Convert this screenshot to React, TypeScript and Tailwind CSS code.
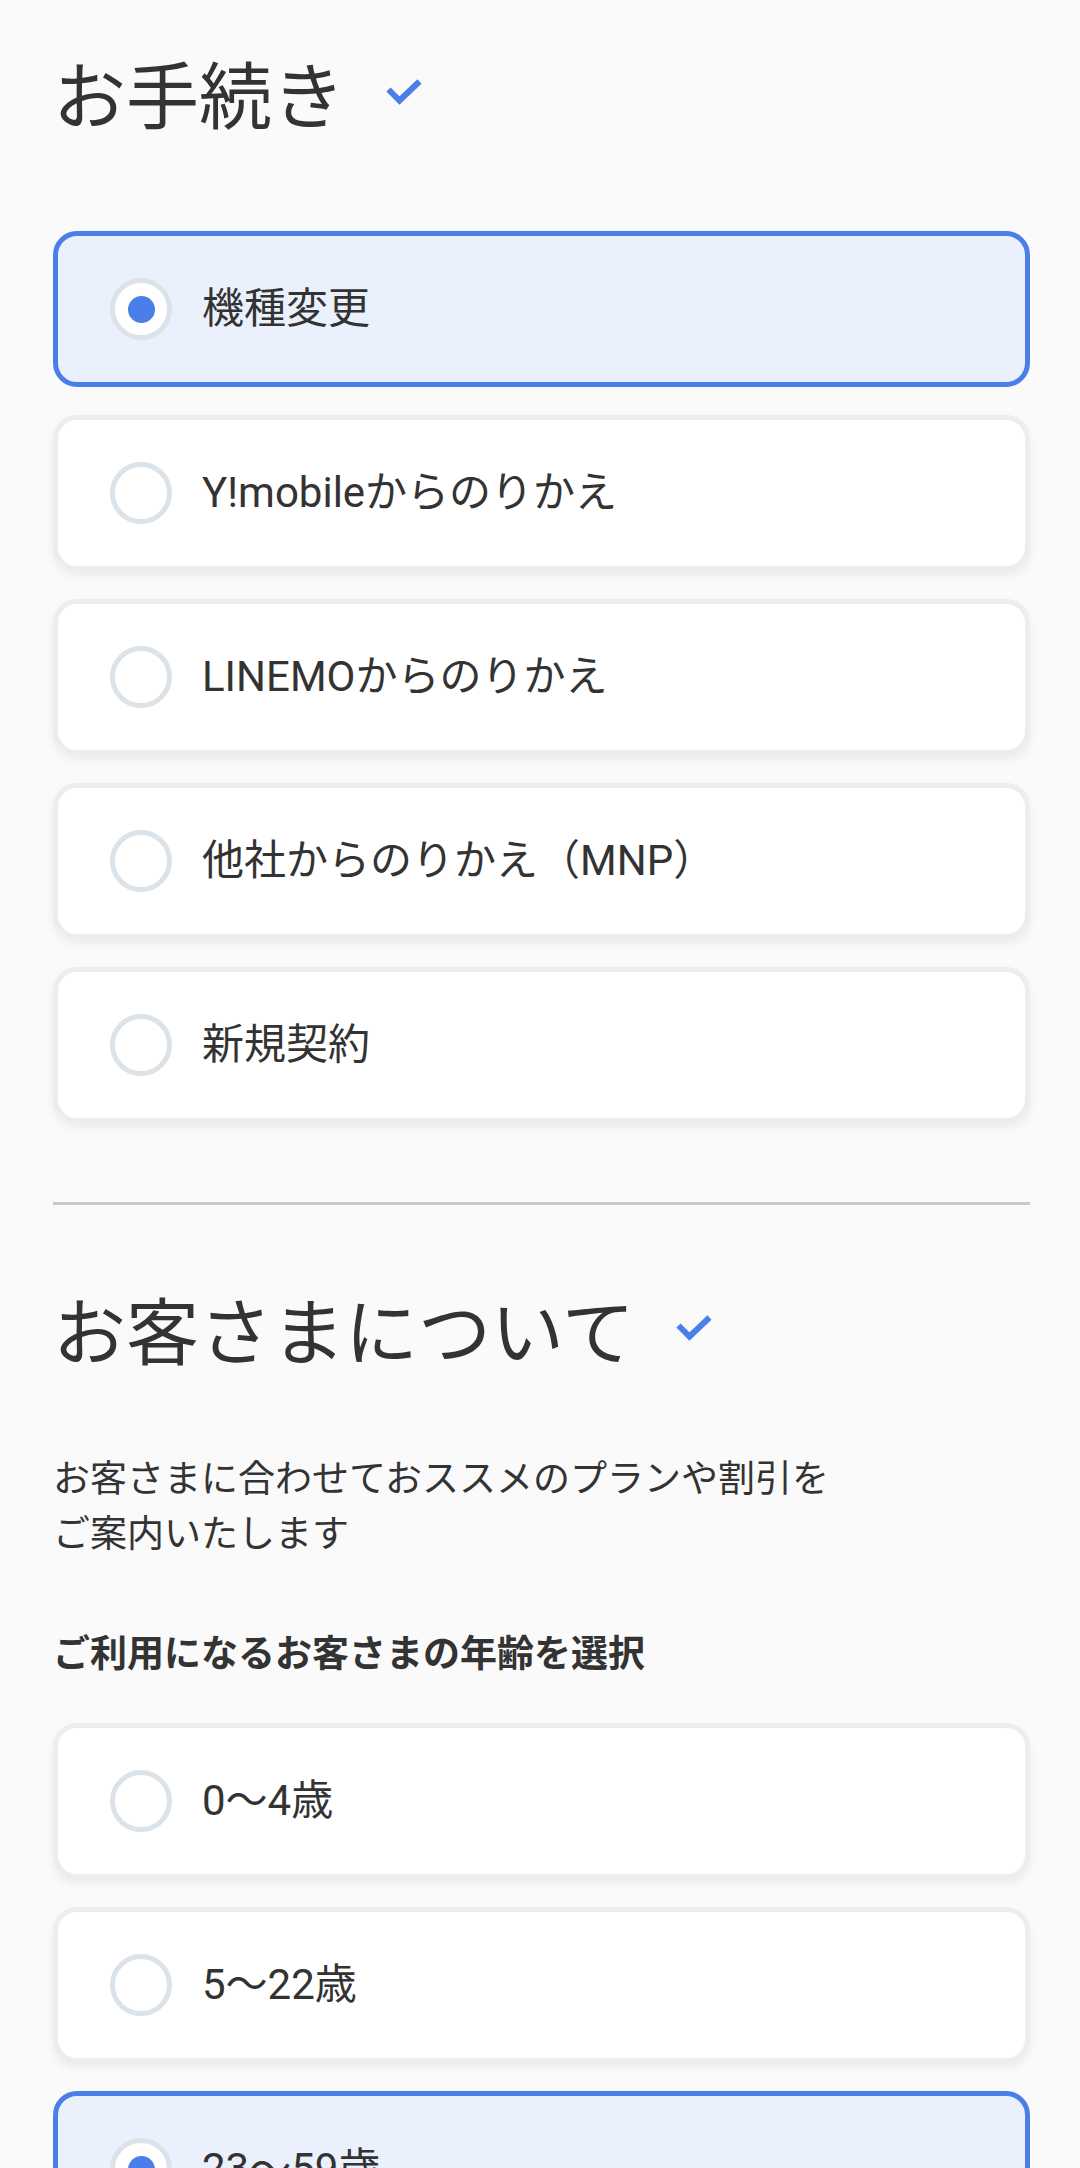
import React from "react";

function CheckIcon() {
  return (
    <svg width="36" height="26" viewBox="0 0 36 26" className="shrink-0">
      <polyline
        points="2.5,10.5 13.5,21.5 33.5,2.5"
        fill="none"
        stroke="#4a7ee8"
        strokeWidth="6"
        strokeLinecap="butt"
        strokeLinejoin="miter"
      />
    </svg>
  );
}

function Option({ label, selected }: { label: string; selected?: boolean }) {
  return (
    <div
      className={
        selected
          ? "flex h-[156px] items-center rounded-[24px] border-[5px] border-[#4a7ee8] bg-[#ebf1fc] pl-[52px]"
          : "flex h-[156px] items-center rounded-[24px] border-[5px] border-[#ededed] bg-white pl-[52px] shadow-[0_5px_8px_rgba(0,0,0,0.06)]"
      }
    >
      <div className="flex h-[62px] w-[62px] shrink-0 items-center justify-center rounded-full border-[5px] border-[#dbe2e8] bg-white">
        {selected && <div className="h-[27px] w-[27px] rounded-full bg-[#4a7ee8]" />}
      </div>
      <span className="ml-[30px] font-['Roboto','Noto_Sans_CJK_JP',sans-serif] text-[42px] leading-[60px] text-[#333333]">
        {label}
      </span>
    </div>
  );
}

export default function App() {
  return (
    <div className="min-h-screen bg-[#fafafa] pb-[60px] pl-[53px] pr-[50px] pt-[55px] font-['Noto_Sans_CJK_JP','Noto_Sans',sans-serif] text-[#333333]">
      <div className="flex items-center">
        <h1 className="text-[73px] font-normal leading-[73px]">お手続き</h1>
        <div className="ml-[41px] flex">
          <CheckIcon />
        </div>
      </div>

      <div className="mt-[103px] flex flex-col gap-[28px]">
        <Option label="機種変更" selected />
        <Option label="Y!mobileからのりかえ" />
        <Option label="LINEMOからのりかえ" />
        <Option label="他社からのりかえ（MNP）" />
        <Option label="新規契約" />
      </div>

      <div className="mt-[79px] h-[3px] bg-[#c8c8c8]" />

      <div className="mt-[86px] flex items-center">
        <h2 className="text-[73px] font-normal leading-[73px]">お客さまについて</h2>
        <div className="ml-[41px] flex">
          <CheckIcon />
        </div>
      </div>

      <p className="mt-[85px] text-[37px] leading-[55px]">
        お客さまに合わせておススメのプランや割引を
        <br />
        ご案内いたします
      </p>

      <p className="mt-[65px] text-[37px] font-bold leading-[54px]">
        ご利用になるお客さまの年齢を選択
      </p>

      <div className="mt-[45px] flex flex-col gap-[28px]">
        <Option label="0〜4歳" />
        <Option label="5〜22歳" />
        <Option label="23〜59歳" selected />
        <Option label="60歳以上" />
      </div>
    </div>
  );
}
